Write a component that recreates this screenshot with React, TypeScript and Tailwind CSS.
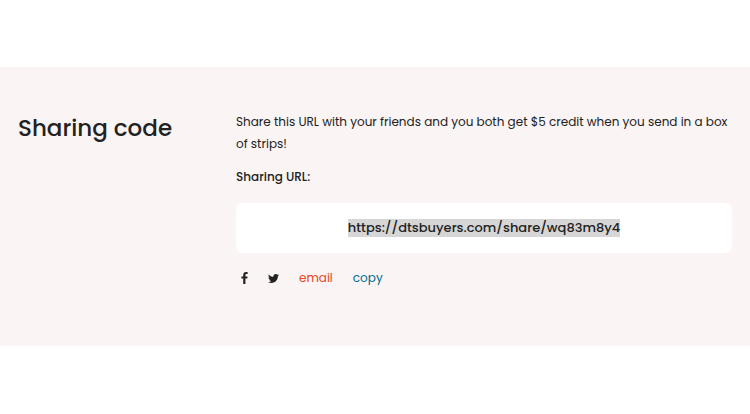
import { useEffect, useRef } from 'react';
import { FaTwitter } from 'react-icons/fa';

const SHARE_URL = 'https://dtsbuyers.com/share/wq83m8y4';

function FacebookIcon() {
  return (
    <svg viewBox="95 0 864 1664" className="h-3 w-[7px]" fill="currentColor" aria-hidden="true">
      <path d="M959 12v264h-157q-86 0-116 36t-30 108v189h293l-39 296h-254v759h-306v-759h-255v-296h255v-218q0-186 104-288.500t277-102.500q147 0 228 12z" />
    </svg>
  );
}

export default function App() {
  const urlRef = useRef<HTMLInputElement>(null);

  useEffect(() => {
    urlRef.current?.focus();
    urlRef.current?.select();
  }, []);

  const copyUrl = () => {
    urlRef.current?.select();
    navigator.clipboard?.writeText(SHARE_URL);
  };

  return (
    <main className="bg-white py-[67px] font-[Poppins,Inter,sans-serif] text-[#222222]">
      <section className="grid grid-cols-[200px_1fr] gap-[18px] bg-[#faf4f4] px-[18px] pt-11 pb-[57px]">
        <h2 className="text-[23px] leading-[34px] font-medium">Sharing code</h2>

        <div className="text-xs leading-[22px]">
          <p>
            Share this URL with your friends and you both get $5 credit when you send in a box of
            strips!
          </p>

          <label htmlFor="share-url" className="mt-[11px] block font-medium">
            Sharing URL:
          </label>
          <input
            id="share-url"
            ref={urlRef}
            type="text"
            readOnly
            value={SHARE_URL}
            className="mt-[15px] block w-full rounded-md bg-white px-4 py-4 text-center text-[13px] leading-[18px] font-medium outline-none selection:bg-[#d6d6d6] selection:text-[#222222]"
          />

          {/* Share links */}
          <div className="mt-[14px] flex items-center gap-5">
            <a href="#facebook" aria-label="Share on Facebook" className="pl-[5px]">
              <FacebookIcon />
            </a>
            <a href="#twitter" aria-label="Share on Twitter">
              <FaTwitter className="size-[11px]" />
            </a>
            <a href="mailto:" className="text-[#e8471a]">
              email
            </a>
            <button type="button" onClick={copyUrl} className="text-[#006d90]">
              copy
            </button>
          </div>
        </div>
      </section>
    </main>
  );
}
